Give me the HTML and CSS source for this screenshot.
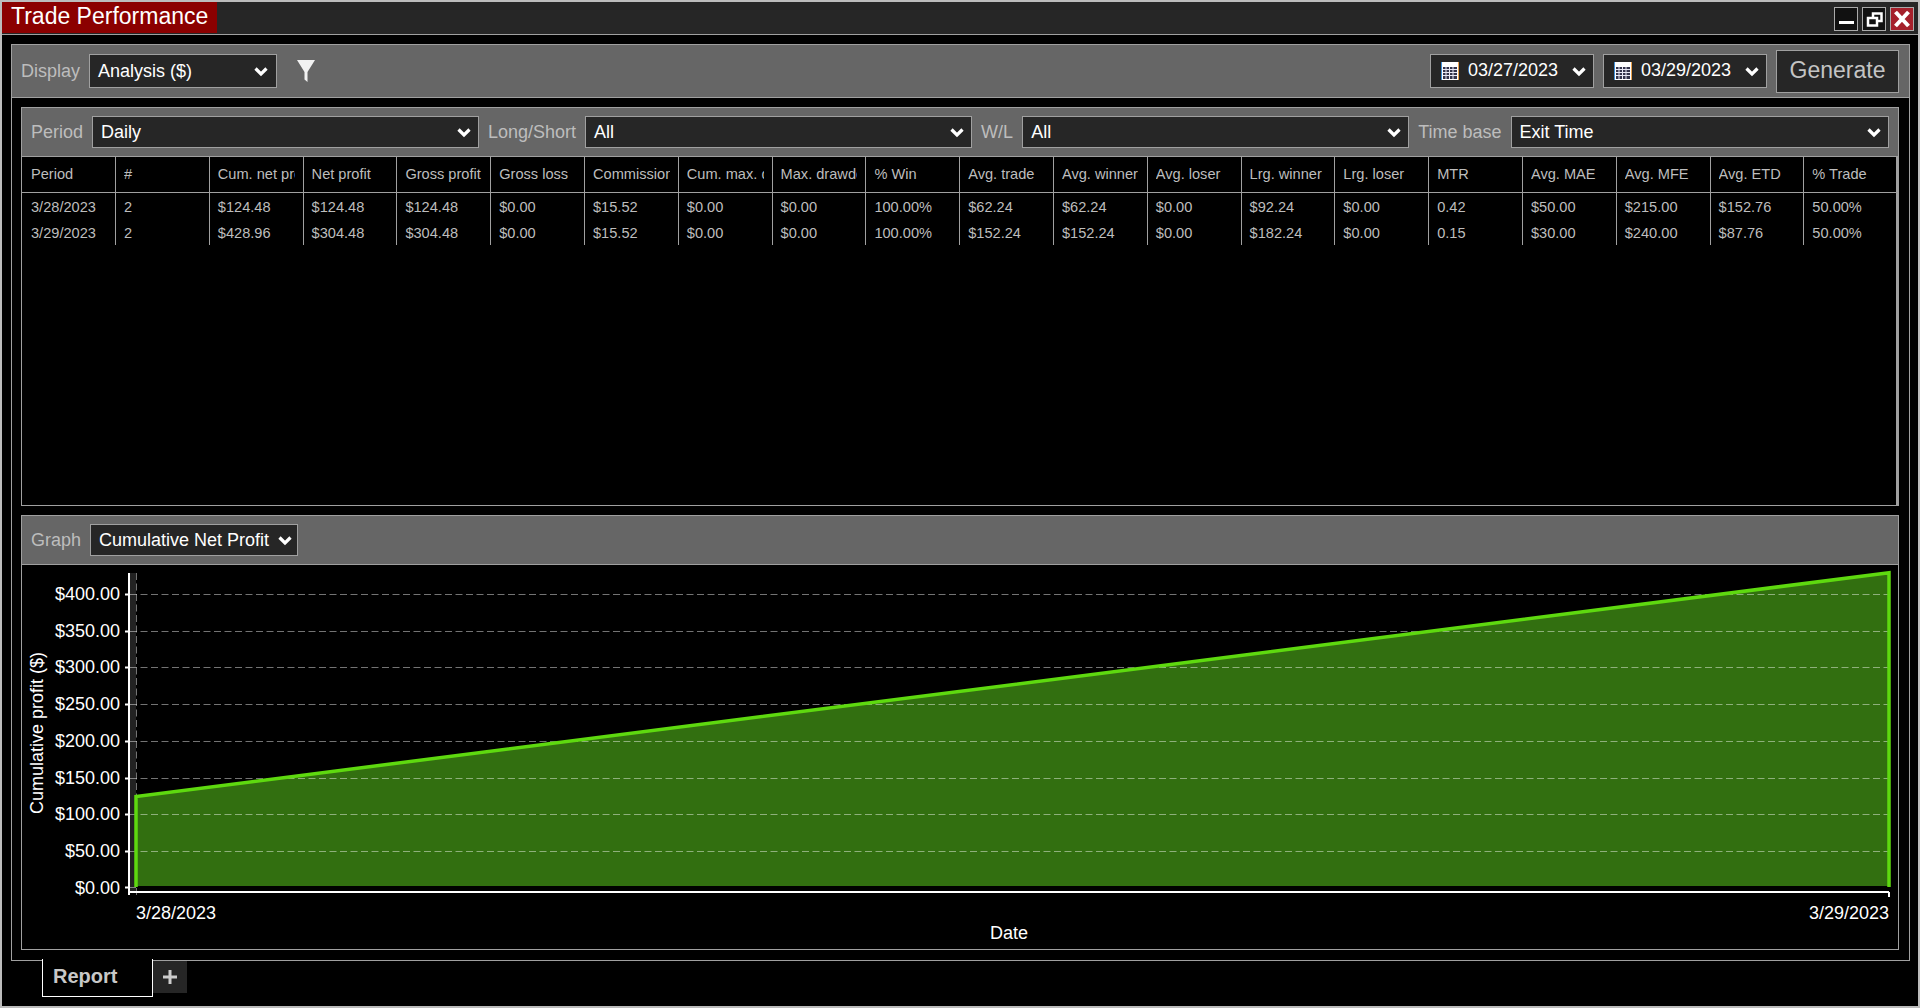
FILE: index.html
```html
<!DOCTYPE html>
<html lang="en">
  <head>
    <meta charset="UTF-8" />
    <title>Trade Performance</title>
    <link rel="stylesheet" href="styles.css">
  </head>
  <body>
    <div class="window">
      <div class="titlebar">
        <div class="title">Trade Performance</div>
        <div class="win-btns">
          <div class="win-btn">
            <svg width="22" height="22" viewBox="0 0 22 22"><rect x="4" y="13" width="15" height="3" fill="#fff"/></svg>
          </div>
          <div class="win-btn">
            <svg width="22" height="22" viewBox="0 0 22 22"><rect x="10" y="5.500" width="8.500" height="7.500" fill="#111" stroke="#fff" stroke-width="2.500"/><rect x="5" y="10" width="9" height="7.500" fill="#111" stroke="#fff" stroke-width="2.500"/></svg>
          </div>
          <div class="win-btn close">
            <svg width="22" height="22" viewBox="0 0 22 22"><path d="M4.500 4l13 14M17.500 4l-13 14" stroke="#fff" stroke-width="4"/></svg>
          </div>
        </div>
      </div>

      <div class="main">
        <div class="toolbar">
          <span class="label">Display</span>
          <div class="select display-select">Analysis ($)<svg class="chev" viewBox="0 0 14 11"><path d="M1.500 2.500L7 8l5.500-5.500" /></svg></div>
          <svg class="filter" width="20" height="24" viewBox="0 0 20 24"><path d="M1 1h18l-7.500 12v10l-3-2.500V13z" fill="#f2f2f2"/></svg>
          <div class="spacer"></div>
          <div class="select date-select">
            <svg class="cal" width="18" height="18" viewBox="0 0 18 18"><rect width="18" height="18" fill="#fff"/><rect width="1" height="18" fill="#3f8fd8"/><rect x="17" width="1" height="18" fill="#e8a04c"/><rect x="2" y="5" width="14" height="12" fill="#33334a"/><path d="M2 7.500h14M2 10.500h14M2 13.500h14M5 5v12M8.500 5v12M12 5v12" stroke="#e8e8f4" stroke-width="1" fill="none"/></svg>
            <span>03/27/2023</span><svg class="chev" viewBox="0 0 14 11"><path d="M1.500 2.500L7 8l5.500-5.500" /></svg>
          </div>
          <div class="select date-select">
            <svg class="cal" width="18" height="18" viewBox="0 0 18 18"><rect width="18" height="18" fill="#fff"/><rect width="1" height="18" fill="#3f8fd8"/><rect x="17" width="1" height="18" fill="#e8a04c"/><rect x="2" y="5" width="14" height="12" fill="#33334a"/><path d="M2 7.500h14M2 10.500h14M2 13.500h14M5 5v12M8.500 5v12M12 5v12" stroke="#e8e8f4" stroke-width="1" fill="none"/></svg>
            <span>03/29/2023</span><svg class="chev" viewBox="0 0 14 11"><path d="M1.500 2.500L7 8l5.500-5.500" /></svg>
          </div>
          <div class="generate">Generate</div>
        </div>

        <div class="report">
          <div class="panel table-panel">
            <div class="filters">
              <span class="label">Period</span>
              <div class="select f-wide">Daily<svg class="chev" viewBox="0 0 14 11"><path d="M1.500 2.500L7 8l5.500-5.500" /></svg></div>
              <span class="label">Long/Short</span>
              <div class="select f-wide">All<svg class="chev" viewBox="0 0 14 11"><path d="M1.500 2.500L7 8l5.500-5.500" /></svg></div>
              <span class="label">W/L</span>
              <div class="select f-wide">All<svg class="chev" viewBox="0 0 14 11"><path d="M1.500 2.500L7 8l5.500-5.500" /></svg></div>
              <span class="label">Time base</span>
              <div class="select f-time">Exit Time<svg class="chev" viewBox="0 0 14 11"><path d="M1.500 2.500L7 8l5.500-5.500" /></svg></div>
            </div>
            <div class="grid-wrap">
              <div class="grid head">
                <div><span>Period</span></div><div><span>#</span></div><div><span>Cum. net profit</span></div><div><span>Net profit</span></div><div><span>Gross profit</span></div><div><span>Gross loss</span></div><div><span>Commission</span></div><div><span>Cum. max. drawdown</span></div><div><span>Max. drawdown</span></div><div><span>% Win</span></div><div><span>Avg. trade</span></div><div><span>Avg. winner</span></div><div><span>Avg. loser</span></div><div><span>Lrg. winner</span></div><div><span>Lrg. loser</span></div><div><span>MTR</span></div><div><span>Avg. MAE</span></div><div><span>Avg. MFE</span></div><div><span>Avg. ETD</span></div><div><span>% Trade</span></div>
              </div>
              <div class="grid row">
                <div>3/28/2023</div><div>2</div><div>$124.48</div><div>$124.48</div><div>$124.48</div><div>$0.00</div><div>$15.52</div><div>$0.00</div><div>$0.00</div><div>100.00%</div><div>$62.24</div><div>$62.24</div><div>$0.00</div><div>$92.24</div><div>$0.00</div><div>0.42</div><div>$50.00</div><div>$215.00</div><div>$152.76</div><div>50.00%</div>
              </div>
              <div class="grid row">
                <div>3/29/2023</div><div>2</div><div>$428.96</div><div>$304.48</div><div>$304.48</div><div>$0.00</div><div>$15.52</div><div>$0.00</div><div>$0.00</div><div>100.00%</div><div>$152.24</div><div>$152.24</div><div>$0.00</div><div>$182.24</div><div>$0.00</div><div>0.15</div><div>$30.00</div><div>$240.00</div><div>$87.76</div><div>50.00%</div>
              </div>
            </div>
          </div>

          <div class="panel graph-panel">
            <div class="graph-head">
              <span class="label">Graph</span>
              <div class="select graph-select">Cumulative Net Profit<svg class="chev" viewBox="0 0 14 11"><path d="M1.500 2.500L7 8l5.500-5.500" /></svg></div>
            </div>
            <!-- svg origin is x=22 y=565 in the page -->
            <svg class="chart" width="1875" height="384" viewBox="22 565 1875 384">
              <rect x="130" y="573" width="6" height="320" fill="#222"/>
              <polygon points="136,796.500 1889,572.700 1889,886 136,886" fill="#326f10"/>
              <g class="gridlines">
                <line x1="130" x2="1889" y1="594.500" y2="594.500"/>
                <line x1="130" x2="1889" y1="631.500" y2="631.500"/>
                <line x1="130" x2="1889" y1="667.500" y2="667.500"/>
                <line x1="130" x2="1889" y1="704.500" y2="704.500"/>
                <line x1="130" x2="1889" y1="741.500" y2="741.500"/>
                <line x1="130" x2="1889" y1="778.500" y2="778.500"/>
                <line x1="130" x2="1889" y1="814.500" y2="814.500"/>
                <line x1="130" x2="1889" y1="851.500" y2="851.500"/>
                <line x1="130" x2="136" y1="887.500" y2="887.500"/>
                <line x1="136.500" x2="136.500" y1="573" y2="897"/>
              </g>
              <polyline points="136,887 136,796.500 1889,572.700 1889,887" fill="none" stroke="#5ed90f" stroke-width="3.500"/>
              <g class="axis">
                <line x1="129" x2="129" y1="573" y2="895"/>
                <line x1="128" x2="1889" y1="892" y2="892"/>
                <line x1="1889" x2="1889" y1="892" y2="897"/>
                <line x1="125" x2="129" y1="594.500" y2="594.500"/>
                <line x1="125" x2="129" y1="631.500" y2="631.500"/>
                <line x1="125" x2="129" y1="667.500" y2="667.500"/>
                <line x1="125" x2="129" y1="704.500" y2="704.500"/>
                <line x1="125" x2="129" y1="741.500" y2="741.500"/>
                <line x1="125" x2="129" y1="778.500" y2="778.500"/>
                <line x1="125" x2="129" y1="814.500" y2="814.500"/>
                <line x1="125" x2="129" y1="851.500" y2="851.500"/>
                <line x1="125" x2="129" y1="887.500" y2="887.500"/>
              </g>
              <g class="ticks" text-anchor="end">
                <text x="120" y="600">$400.00</text>
                <text x="120" y="637">$350.00</text>
                <text x="120" y="673">$300.00</text>
                <text x="120" y="710">$250.00</text>
                <text x="120" y="747">$200.00</text>
                <text x="120" y="784">$150.00</text>
                <text x="120" y="820">$100.00</text>
                <text x="120" y="857">$50.00</text>
                <text x="120" y="894">$0.00</text>
              </g>
              <g class="ticks">
                <text x="136" y="919">3/28/2023</text>
                <text x="1889" y="919" text-anchor="end">3/29/2023</text>
                <text x="1009" y="939" text-anchor="middle">Date</text>
                <text transform="translate(43 733) rotate(-90)" text-anchor="middle">Cumulative profit ($)</text>
              </g>
            </svg>
          </div>
        </div>
      </div>

      <div class="tabs">
        <div class="tab">Report</div>
        <div class="tab-add">
          <svg width="16" height="16" viewBox="0 0 16 16"><path d="M8 1v14M1 8h14" stroke="#ccc" stroke-width="3"/></svg>
        </div>
      </div>
    </div>
  </body>
</html>
```

FILE: styles.css
```css
* {
  margin: 0;
  padding: 0;
  box-sizing: border-box;
}
html,
body {
  height: 100%;
  background: #000;
  overflow: hidden;
}
body {
  font-family: "Liberation Sans", Arial, sans-serif;
}
.window {
  height: 1008px;
  border: 2px solid #bcbcbc;
  background: #000;
  display: flex;
  flex-direction: column;
}
.titlebar {
  height: 33px;
  flex: none;
  background: #262626;
  border-bottom: 1px solid #a0a0a0;
  display: flex;
  justify-content: space-between;
}
.title {
  width: 215px;
  height: 31px;
  background: #8b0000;
  color: #fff;
  font-size: 23px;
  line-height: 29px;
  padding-left: 9px;
}
.win-btns {
  display: flex;
  gap: 4px;
  padding: 5px 4px 0 0;
}
.win-btn {
  width: 24px;
  height: 24px;
  border: 1px solid #aaa;
  background: #111;
}
.win-btn.close {
  background: #a5202b;
}
.win-btn svg {
  display: block;
}

.main {
  flex: none;
  margin: 9px 8px 0 9px;
  height: 917px;
  border: 1px solid #a0a0a0;
  border-top: none;
  display: flex;
  flex-direction: column;
}
.toolbar {
  height: 54px;
  flex: none;
  background: #666;
  border: 1px solid #a0a0a0;
  border-width: 1px 0 1px 0;
  display: flex;
  align-items: center;
  gap: 9px;
  padding: 0 10px 0 9px;
}
.spacer {
  flex: 1;
}
.label {
  color: #bdbdbd;
  font-size: 18px;
  white-space: nowrap;
}
.select {
  background: #262626;
  border: 1px solid #a0a0a0;
  color: #fff;
  font-size: 18px;
  display: flex;
  align-items: center;
  justify-content: space-between;
  padding: 0 7px 0 8px;
  white-space: nowrap;
}
.chev {
  width: 14px;
  height: 11px;
  flex: none;
  fill: none;
  stroke: #fff;
  stroke-width: 3.200;
}
.display-select {
  width: 188px;
  height: 34px;
  padding-right: 8px;
}
.filter {
  margin-left: 10px;
}
.date-select {
  width: 164px;
  height: 34px;
  padding: 0 7px 0 10px;
}
.date-select span {
  flex: 1;
  margin-left: 9px;
  padding-bottom: 2px;
}
.generate {
  width: 123px;
  height: 43px;
  background: #262626;
  border: 1px solid #a0a0a0;
  color: #c4c4c4;
  font-size: 23px;
  line-height: 39px;
  text-align: center;
}

.report {
  flex: 1;
  padding: 9px 10px 10px 9px;
  display: flex;
  flex-direction: column;
  gap: 9px;
}
.panel {
  border: 1px solid #a0a0a0;
  background: #000;
}
.table-panel {
  height: 399px;
  flex: none;
  display: flex;
  flex-direction: column;
}
.filters {
  height: 49px;
  flex: none;
  background: #666;
  border-bottom: 1px solid #a0a0a0;
  display: flex;
  align-items: center;
  gap: 9px;
  padding: 0 9px;
}
.f-wide {
  width: 387px;
  height: 32px;
}
.f-time {
  width: 378px;
  height: 32px;
}
.grid-wrap {
  flex: 1;
  border-right: 2px solid #a0a0a0;
  overflow: hidden;
}
.grid {
  display: grid;
  grid-template-columns: 93px repeat(19, 93.8px);
  font-size: 14.600px;
  color: #bdbdbd;
}
.grid > div {
  padding-left: 8px;
  border-left: 1px solid #a0a0a0;
  white-space: nowrap;
}
.grid > div:first-child {
  padding-left: 9px;
  border-left: none;
}
.head {
  height: 36px;
  border-bottom: 1px solid #a0a0a0;
  line-height: 35px;
}
.head > div {
  padding-right: 8px;
}
.head span {
  display: block;
  overflow: hidden;
}
.row {
  grid-template-rows: 26px;
  height: 26px;
  line-height: 26px;
}
.row > div {
  padding-top: 1px;
}

.graph-panel {
  flex: 1;
  min-height: 0;
}
.graph-head {
  height: 49px;
  background: #666;
  border-bottom: 1px solid #a0a0a0;
  display: flex;
  align-items: center;
  gap: 9px;
  padding: 0 9px;
}
.graph-select {
  width: 208px;
  height: 32px;
  padding-right: 5px;
}
.chart {
  display: block;
}
.gridlines line {
  stroke: rgba(255, 255, 255, 0.45);
  stroke-width: 1;
  stroke-dasharray: 7 3.500;
}
.axis line {
  stroke: #fff;
  stroke-width: 2;
}
.ticks text,
.ticks {
  fill: #fff;
  font-size: 18px;
}

.tabs {
  flex: 1;
  display: flex;
  align-items: flex-start;
  padding-left: 40px;
}
.tab {
  width: 111px;
  height: 38px;
  margin-top: -2px;
  background: #000;
  border: 1px solid #fff;
  border-top: none;
  color: #c8c8c8;
  font-size: 20px;
  font-weight: bold;
  line-height: 35px;
  padding-left: 10px;
}
.tab-add {
  width: 34px;
  height: 32px;
  background: #262626;
  display: flex;
  align-items: center;
  justify-content: center;
}
```
